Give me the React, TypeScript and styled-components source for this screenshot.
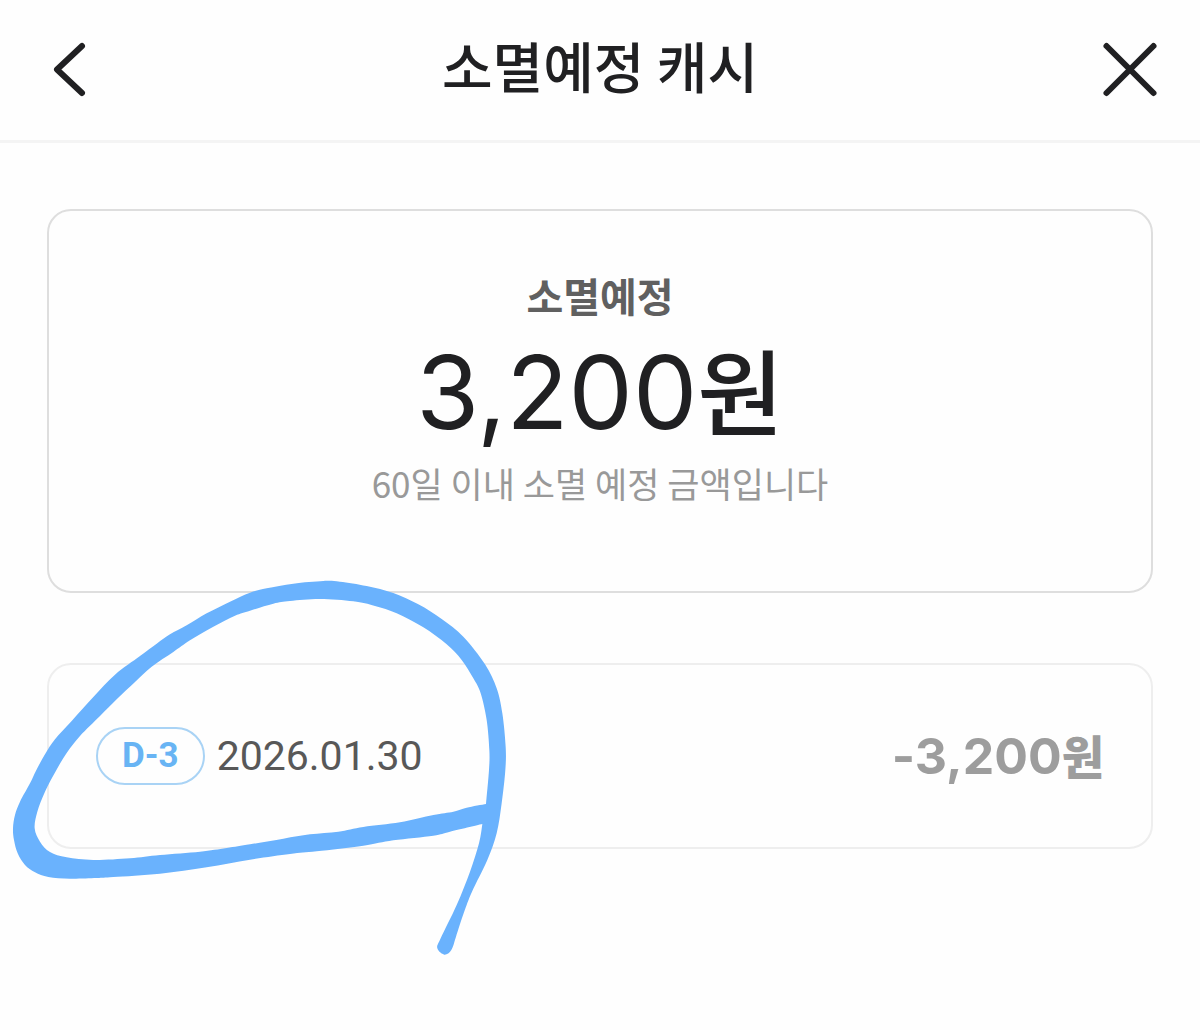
import React from "react";
import styled, { createGlobalStyle } from "styled-components";

const GlobalStyle = createGlobalStyle`
  *, *::before, *::after { box-sizing: border-box; }
  body {
    margin: 0;
    background: #fefefe;
    color: #202022;
    font-family: "Noto Sans CJK KR", sans-serif;
  }
`;

const Page = styled.div`
  min-height: 100vh;
`;

const Header = styled.header`
  display: flex;
  align-items: center;
  justify-content: space-between;
  height: 143px;
  padding: 0 40px;
  border-bottom: 3px solid #f4f4f4;
`;

const IconButton = styled.button`
  display: flex;
  align-items: center;
  justify-content: center;
  width: 60px;
  height: 60px;
  padding: 0;
  border: 0;
  background: none;
  color: #202022;
  cursor: pointer;
`;

const Title = styled.h1`
  margin: 0;
  padding-bottom: 12px;
  font-size: 55px;
  font-weight: 500;
  line-height: 80px;
`;

const Content = styled.main`
  display: flex;
  flex-direction: column;
  gap: 70px;
  padding: 66px 47px 120px;
`;

const Card = styled.section<{ $line: string }>`
  position: relative;
  border: 2px solid ${(p) => p.$line};
  border-radius: 24px;
`;

const Summary = styled(Card)`
  display: flex;
  flex-direction: column;
  align-items: center;
  padding: 54px 24px 84px;
`;

const Label = styled.h2`
  margin: 0;
  color: #606060;
  font-size: 40px;
  font-weight: 700;
  line-height: 60px;
`;

const Total = styled.strong`
  font-family: Inter, "Noto Sans CJK KR", sans-serif;
  font-size: 102px;
  font-weight: 400;
  line-height: 134px;
`;

const TotalUnit = styled.span`
  font-size: 94px;
  font-weight: 500;
  line-height: 1;
`;

const Note = styled.p`
  margin: 0;
  color: #999;
  font-size: 35px;
  font-weight: 400;
  line-height: 48px;
`;

const Entry = styled(Card)`
  display: flex;
  align-items: center;
  justify-content: space-between;
  padding: 62px 47px;
`;

const Due = styled.div`
  display: flex;
  align-items: center;
  gap: 12px;
  font-family: Roboto, sans-serif;
`;

const Badge = styled.span`
  padding: 0 24px;
  border: 2px solid #a9d3f5;
  border-radius: 29px;
  color: #68b4f4;
  font-size: 35px;
  font-weight: 700;
  line-height: 54px;
`;

const DueDate = styled.time`
  color: #585858;
  font-size: 41px;
  line-height: 58px;
`;

const Amount = styled.span`
  color: #9d9d9d;
  font-family: Inter, "Noto Sans CJK KR", sans-serif;
  font-size: 50px;
  font-weight: 700;
  line-height: 58px;
`;

const AmountUnit = styled.span`
  font-size: 46px;
  font-weight: 900;
  line-height: 1;
`;

const Scribble = styled.svg`
  position: absolute;
  top: -95px;
  left: -49px;
  width: 540px;
  height: 400px;
  pointer-events: none;
`;

type Point = [number, number];

const outer: Point[] = [
  [1447, 762], [1437, 820], [1410, 905], [1370, 1005], [1322, 1105], [1312, 1135], [1333, 1154],
  [1354, 1140], [1368, 1100], [1392, 1027], [1416, 965], [1462, 870], [1490, 790], [1505, 700],
  [1516, 600], [1517, 530], [1507, 430], [1490, 355], [1455, 283], [1390, 200], [1325, 147],
  [1255, 103], [1180, 69], [1100, 48], [1020, 35], [970, 33], [880, 41], [800, 55], [750, 68],
  [690, 95], [620, 130], [560, 166], [510, 193], [470, 221], [420, 258], [345, 314], [280, 381],
  [215, 453], [165, 508], [135, 553], [108, 602], [90, 640], [60, 695], [45, 735], [39, 775],
  [42, 810], [53, 850], [75, 885], [105, 907], [145, 921], [210, 926], [290, 924], [340, 921],
  [480, 911], [620, 892], [750, 869], [870, 852], [950, 844], [1090, 827], [1180, 811],
  [1300, 797], [1350, 785], [1447, 762],
];

const inner: Point[] = [
  [1458, 702], [1467, 600], [1468, 540], [1460, 450], [1442, 370], [1420, 325], [1385, 270],
  [1340, 223], [1270, 172], [1190, 130], [1125, 108], [1060, 94], [960, 87], [870, 93],
  [820, 101], [750, 122], [705, 137], [640, 170], [570, 211], [520, 246], [455, 290], [405, 336],
  [350, 388], [300, 438], [240, 498], [200, 549], [168, 602], [135, 665], [112, 725], [104, 775],
  [120, 815], [150, 846], [200, 862], [280, 870], [390, 865], [480, 855], [600, 845], [680, 834],
  [750, 823], [850, 806], [930, 793], [1015, 785], [1090, 771], [1200, 757], [1300, 735],
  [1360, 725], [1400, 713], [1458, 702],
];

/* Smooth curve through every point (Catmull-Rom as cubic Béziers). */
function smooth(points: Point[]): string {
  let d = `M${points[0].join(" ")}`;
  for (let i = 0; i < points.length - 1; i++) {
    const a = points[Math.max(i - 1, 0)];
    const b = points[i];
    const c = points[i + 1];
    const e = points[Math.min(i + 2, points.length - 1)];
    d += `C${b[0] + (c[0] - a[0]) / 6} ${b[1] + (c[1] - a[1]) / 6} ${c[0] - (e[0] - b[0]) / 6} ${
      c[1] - (e[1] - b[1]) / 6
    } ${c[0]} ${c[1]}`;
  }
  return d + "Z";
}

export default function App() {
  return (
    <Page>
      <GlobalStyle />
      <Header>
        <IconButton type="button" aria-label="뒤로">
          <svg width="60" height="60" viewBox="0 0 60 60" fill="none" stroke="currentColor" strokeWidth="6" strokeLinecap="round" strokeLinejoin="round">
            <path d="M42 6 17 29.500 42 53" />
          </svg>
        </IconButton>
        <Title>소멸예정 캐시</Title>
        <IconButton type="button" aria-label="닫기">
          <svg width="60" height="60" viewBox="0 0 60 60" fill="none" stroke="currentColor" strokeWidth="6" strokeLinecap="round">
            <path d="M6.500 6 53.500 53M53.500 6 6.500 53" />
          </svg>
        </IconButton>
      </Header>
      <Content>
        <Summary $line="#dedede">
          <Label>소멸예정</Label>
          <Total>
            3,200<TotalUnit>원</TotalUnit>
          </Total>
          <Note>60일 이내 소멸 예정 금액입니다</Note>
        </Summary>
        <Entry $line="#eee">
          <Due>
            <Badge>D-3</Badge>
            <DueDate dateTime="2026-01-30">2026.01.30</DueDate>
          </Due>
          <Amount>
            -3,200<AmountUnit>원</AmountUnit>
          </Amount>
          <Scribble viewBox="0 0 1620 1200" aria-hidden="true">
            <path d={smooth(outer) + smooth(inner)} fill="#6ab2fd" fillRule="evenodd" />
          </Scribble>
        </Entry>
      </Content>
    </Page>
  );
}
